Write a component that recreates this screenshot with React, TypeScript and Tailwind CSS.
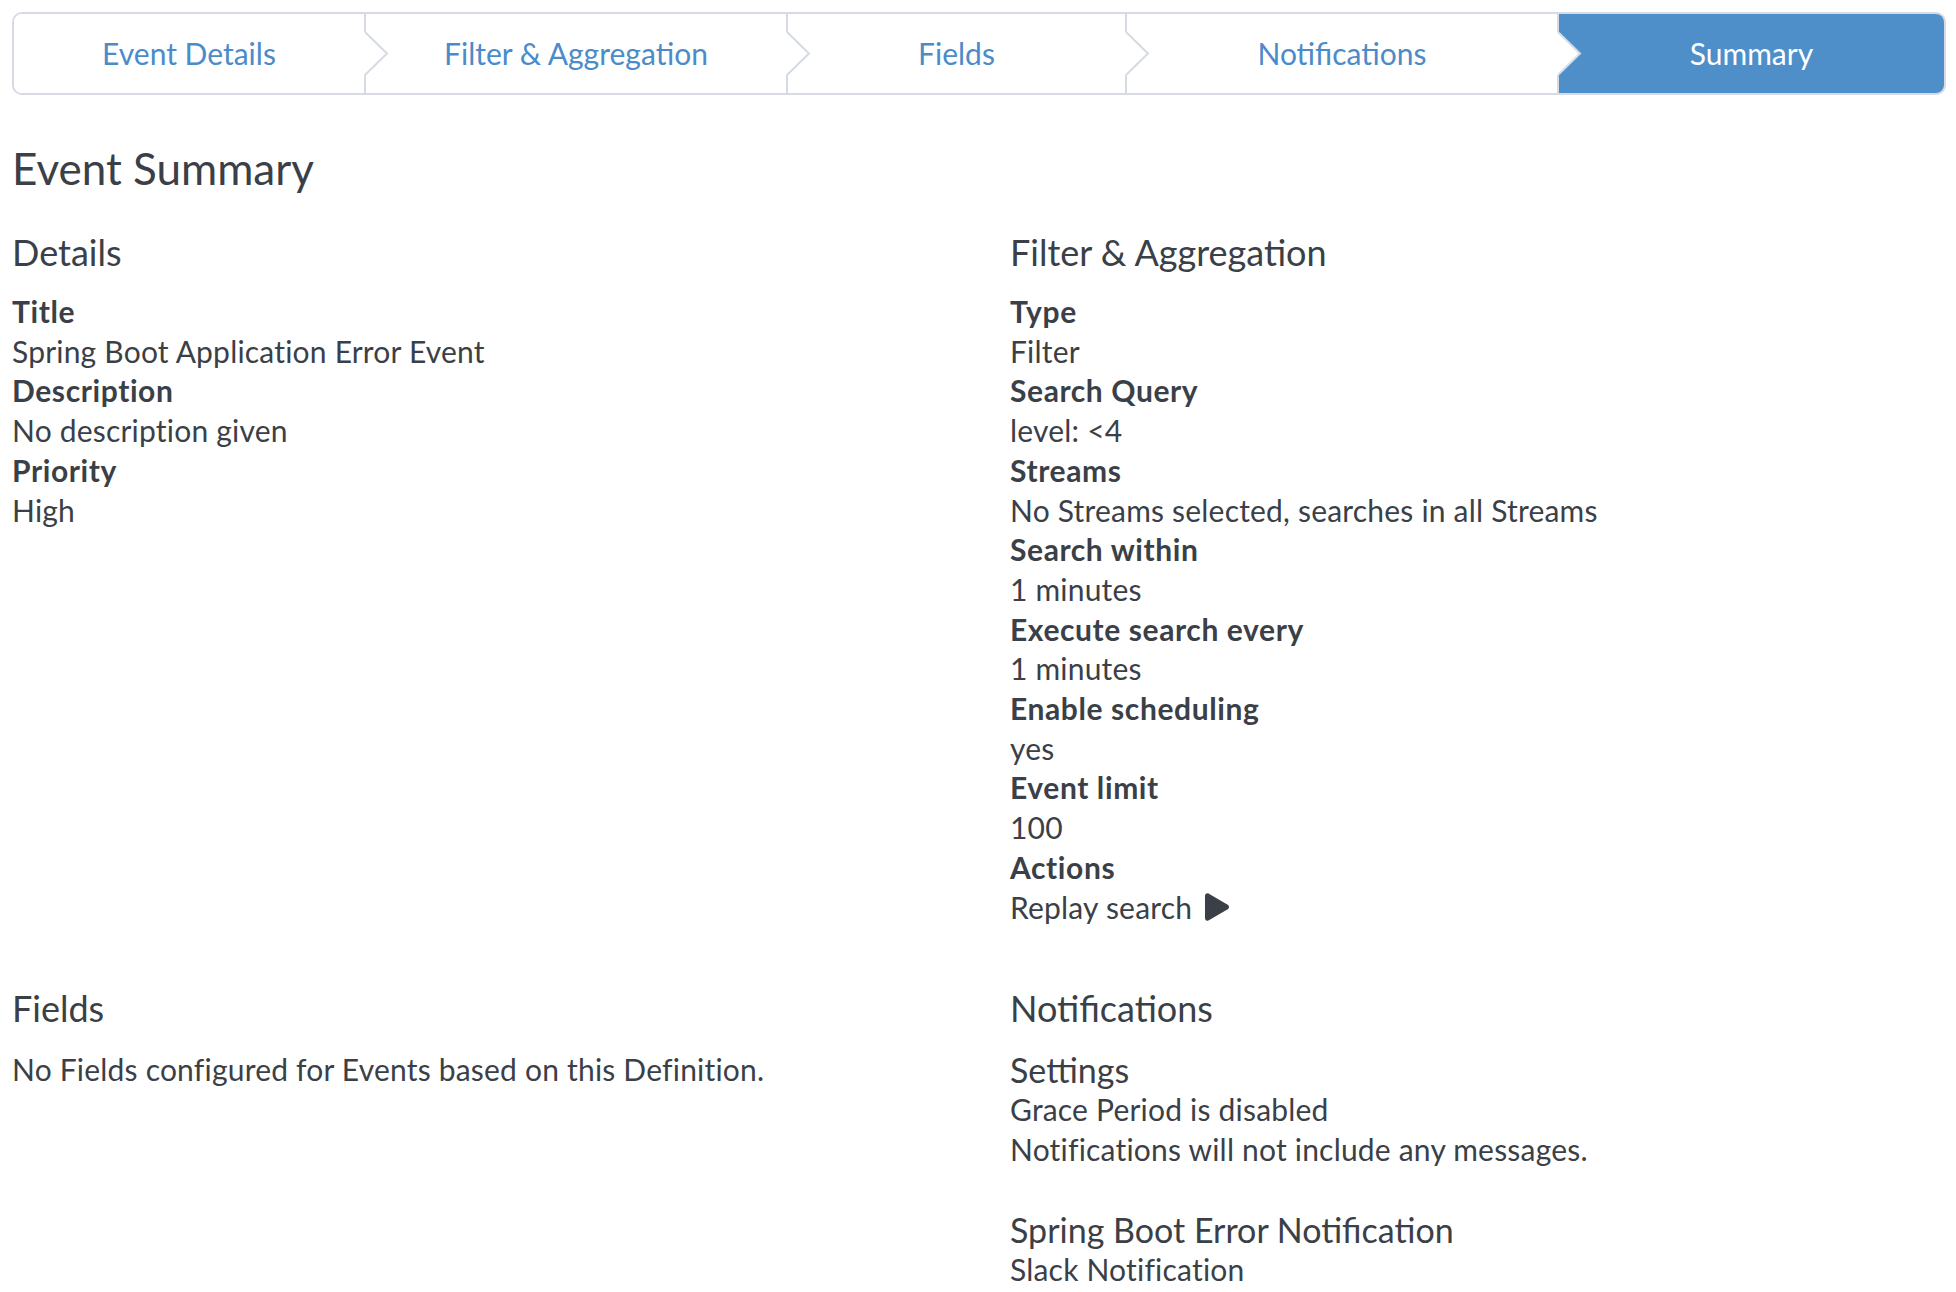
import { FaPlay } from "react-icons/fa";

const tabs = [
    { label: "Event Details", width: "w-[350px]" },
    { label: "Filter & Aggregation", width: "w-[422px]" },
    { label: "Fields", width: "w-[339px]" },
    { label: "Notifications", width: "w-[432px]" },
    { label: "Summary", width: "w-[387px]" },
];

function Chevron() {
    // arrow of the previous step, drawn over this tab's left border
    return (
        <svg className="absolute -left-[2px] top-[18px]" width="26" height="43" viewBox="0 0 26 43">
            <polygon points="0,0 1,0 23,21.5 1,43 0,43" fill="#ffffff" />
            <polyline points="1,0 23,21.5 1,43" fill="none" stroke="#d5dae3" strokeWidth="2" />
        </svg>
    );
}

function Item({ label, value }: { label: string; value: React.ReactNode }) {
    return (
        <>
            <dt className="font-bold tracking-[0.6px]">{label}</dt>
            <dd>{value}</dd>
        </>
    );
}

export default function App() {
    return (
        <div className="min-h-[1292px] bg-white text-[#3b3f47] font-[Lato,sans-serif] text-[30px] leading-[39.7px] tracking-[0.2px]">
            <div className="ml-[12px] mt-[12px] w-[1934px] h-[83px] flex border-2 border-[#d5dae3] rounded-[10px] overflow-hidden">
                {tabs.map((tab, i) => {
                    const active = i === tabs.length - 1;
                    return (
                        <div
                            key={tab.label}
                            className={`relative flex items-center justify-center tracking-normal ${tab.width} ${i > 0 ? "border-l-2 border-[#d5dae3]" : ""} ${active ? "bg-[#4e8fca] text-white" : "bg-white text-[#4b8bca]"}`}
                        >
                            {i > 0 && <Chevron />}
                            <span>{tab.label}</span>
                        </div>
                    );
                })}
            </div>

            <div className="px-[12px]">
                <h1 className="mt-[49px] text-[44px] leading-[48px] tracking-normal">Event Summary</h1>

                <div className="mt-[40px] grid grid-cols-[998px_1fr]">
                    <section>
                        <h2 className="text-[36px] leading-[40px] tracking-normal">Details</h2>
                        <dl className="mt-[20px]">
                            <Item label="Title" value="Spring Boot Application Error Event" />
                            <Item label="Description" value="No description given" />
                            <Item label="Priority" value="High" />
                        </dl>
                    </section>
                    <section>
                        <h2 className="text-[36px] leading-[40px] tracking-normal">Filter &amp; Aggregation</h2>
                        <dl className="mt-[20px]">
                            <Item label="Type" value="Filter" />
                            <Item label="Search Query" value="level: <4" />
                            <Item label="Streams" value="No Streams selected, searches in all Streams" />
                            <Item label="Search within" value="1 minutes" />
                            <Item label="Execute search every" value="1 minutes" />
                            <Item label="Enable scheduling" value="yes" />
                            <Item label="Event limit" value="100" />
                            <Item
                                label="Actions"
                                value={
                                    <span className="flex items-center gap-[13px]">
                                        Replay search
                                        <FaPlay className="w-[24px] h-[28px]" />
                                    </span>
                                }
                            />
                        </dl>
                    </section>

                    <section className="mt-[61px]">
                        <h2 className="text-[36px] leading-[40px] tracking-normal">Fields</h2>
                        <p className="mt-[22px]">No Fields configured for Events based on this Definition.</p>
                    </section>
                    <section className="mt-[61px]">
                        <h2 className="text-[36px] leading-[40px] tracking-normal">Notifications</h2>
                        <div className="mt-[22px]">
                            <h3 className="text-[34px] leading-[40px] tracking-normal">Settings</h3>
                            <p>Grace Period is disabled</p>
                            <p>Notifications will not include any messages.</p>
                        </div>
                        <div className="mt-[40px]">
                            <h3 className="text-[34px] leading-[40px] tracking-normal">Spring Boot Error Notification</h3>
                            <p>Slack Notification</p>
                        </div>
                    </section>
                </div>
            </div>
        </div>
    );
}
